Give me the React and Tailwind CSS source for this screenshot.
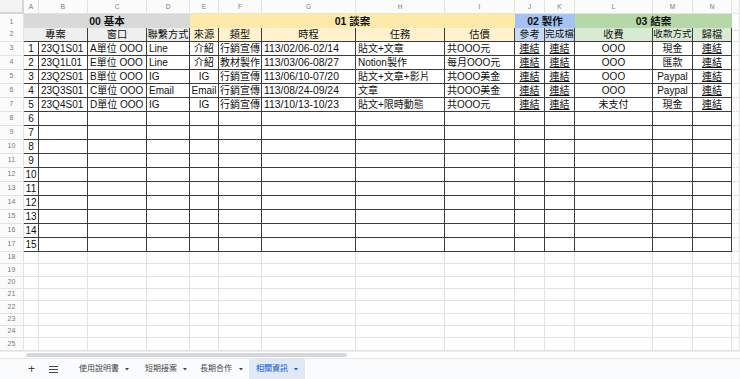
import React from 'react';

const GRID =
  'grid grid-cols-[24px_15px_49px_59px_43px_29px_43px_94px_89px_70px_30px_30px_78px_40px_39px_1fr]';

const LETTERS = ['A', 'B', 'C', 'D', 'E', 'F', 'G', 'H', 'I', 'J', 'K', 'L', 'M', 'N', ''];

// alignment per column A..N
const ALIGN = ['c', 'l', 'l', 'l', 'c', 'l', 'l', 'l', 'l', 'c', 'c', 'c', 'c', 'c'];
const LINK_COLS = [9, 10, 13];

const rows = [
  ['1', '23Q1S01', 'A單位 OOO', 'Line', '介紹', '行銷宣傳', '113/02/06-02/14', '貼文+文章', '共OOO元', '連結', '連結', 'OOO', '現金', '連結'],
  ['2', '23Q1L01', 'E單位 OOO', 'Line', '介紹', '教材製作', '113/03/06-08/27', 'Notion製作', '每月OOO元', '連結', '連結', 'OOO', '匯款', '連結'],
  ['3', '23Q2S01', 'B單位 OOO', 'IG', 'IG', '行銷宣傳', '113/06/10-07/20', '貼文+文章+影片', '共OOO美金', '連結', '連結', 'OOO', 'Paypal', '連結'],
  ['4', '23Q3S01', 'C單位 OOO', 'Email', 'Email', '行銷宣傳', '113/08/24-09/24', '文章', '共OOO美金', '連結', '連結', 'OOO', 'Paypal', '連結'],
  ['5', '23Q4S01', 'D單位 OOO', 'IG', 'IG', '行銷宣傳', '113/10/13-10/23', '貼文+限時動態', '共OOO元', '連結', '連結', '未支付', '現金', '連結'],
];

// empty numbered rows 6..15
for (let n = 6; n <= 15; n++) {
  rows.push([String(n), '', '', '', '', '', '', '', '', '', '', '', '', '']);
}

const RowNum = ({ n }) => (
  <div className="flex items-center justify-center border-r border-b border-[#e3e3e3] bg-[#fbfbfb] text-[7px] text-[#7a7a7a]">
    {n}
  </div>
);

const Caret = ({ color = '#444746' }) => (
  <svg width="6" height="6" viewBox="0 0 6 6" className="shrink-0">
    <path d="M1 2 L5 2 L3 4.4 Z" fill={color} />
  </svg>
);

const DataRow = ({ r, idx }) => (
  <div className={`${GRID} h-[14px]`}>
    <RowNum n={idx + 3} />
    {r.map((v, i) => {
      const isLink = LINK_COLS.includes(i) && v === '連結';
      return (
        <div
          key={i}
          className={`flex items-center overflow-hidden whitespace-nowrap border-r border-b border-[#3c3c3c] ${
            i === 5 ? 'px-[1px]' : 'px-[2px]'
          } ${i === 6 ? 'text-[10.4px]' : 'text-[10px]'} ${
            ALIGN[i] === 'c' ? 'justify-center' : 'justify-start'
          }`}
        >
          <span className={isLink ? 'underline underline-offset-[1px]' : ''}>{v}</span>
        </div>
      );
    })}
    <div className="border-r border-b border-[#e3e3e3]" />
  </div>
);

const EmptyRow = ({ n }) => (
  <div className={`${GRID} h-[12.35px] shrink-0`}>
    <RowNum n={n} />
    {LETTERS.map((l, i) => (
      <div key={i} className="border-r border-b border-[#e3e3e3]" />
    ))}
  </div>
);

const Sub = ({ children, bg, span, size }) => (
  <div
    className={`flex items-center justify-center overflow-hidden whitespace-nowrap border-r border-b border-[#3c3c3c] ${size || 'text-[10.2px]'} ${bg} ${span || ''}`}
  >
    {children}
  </div>
);

export default function App() {
  return (
    <div className="flex h-[379px] w-[740px] flex-col overflow-hidden bg-white font-['Liberation_Sans','Noto_Sans_CJK_TC',sans-serif] text-[#111]">
      {/* sheet grid */}
      <div className="flex h-[351px] flex-col overflow-hidden">
        {/* column letters */}
        <div className={`${GRID} h-[14px] shrink-0`}>
          <div className="border-r-2 border-b-2 border-[#d6d6d6] bg-[#f3f3f3]" />
          {LETTERS.map((l, i) => (
            <div
              key={i}
              className="flex items-center justify-center border-r border-b border-[#e3e3e3] bg-[#fbfbfb] text-[6.5px] text-[#7a7a7a]"
            >
              {l}
            </div>
          ))}
        </div>

        {/* row 1: section headers */}
        <div className={`${GRID} h-[14px] shrink-0`}>
          <RowNum n={1} />
          <div className="col-span-4 flex items-center justify-center border-b border-[#cfcfcf] bg-[#d9d9d9] text-[10.5px] font-bold">
            00 基本
          </div>
          <div className="col-span-5 flex items-center justify-center border-b border-[#e8d9a8] bg-[#fde9aa] text-[10.5px] font-bold">
            01 談案
          </div>
          <div className="col-span-2 flex items-center justify-center border-b border-[#b3c9ee] bg-[#a4c2f4] text-[10.5px] font-bold">
            02 製作
          </div>
          <div className="col-span-3 flex items-center justify-center border-b border-[#c6dcbd] bg-[#b6d7a8] text-[10.5px] font-bold">
            03 結案
          </div>
          <div className="border-r border-b border-[#e3e3e3]" />
        </div>

        {/* row 2: column titles */}
        <div className={`${GRID} h-[14px] shrink-0`}>
          <RowNum n={2} />
          <Sub bg="bg-[#efefef]" span="col-span-2">專案</Sub>
          <Sub bg="bg-[#efefef]">窗口</Sub>
          <Sub bg="bg-[#efefef]">聯繫方式</Sub>
          <Sub bg="bg-[#fff2cc]">來源</Sub>
          <Sub bg="bg-[#fff2cc]">類型</Sub>
          <Sub bg="bg-[#fff2cc]">時程</Sub>
          <Sub bg="bg-[#fff2cc]">任務</Sub>
          <Sub bg="bg-[#fff2cc]">估價</Sub>
          <Sub bg="bg-[#c9daf8]">參考</Sub>
          <Sub bg="bg-[#c9daf8]" size="text-[9.6px]">完成檔</Sub>
          <Sub bg="bg-[#d9ead3]">收費</Sub>
          <Sub bg="bg-[#d9ead3]" size="text-[9.6px]">收款方式</Sub>
          <Sub bg="bg-[#d9ead3]">歸檔</Sub>
          <div className="border-r border-b border-[#e3e3e3]" />
        </div>

        {/* rows 3-17 */}
        {rows.map((r, idx) => (
          <DataRow key={idx} r={r} idx={idx} />
        ))}

        {/* rows 18+ */}
        {[18, 19, 20, 21, 22, 23, 24, 25, ''].map((n, i) => (
          <EmptyRow key={i} n={n} />
        ))}
      </div>

      {/* horizontal scrollbar */}
      <div className="h-[7px] shrink-0 border-t border-[#ececec] bg-white">
        <div className="ml-[26px] mt-[1px] h-[4px] w-[321px] rounded-full bg-[#d5d7da]" />
      </div>

      {/* sheet tabs */}
      <div className="flex h-[21px] shrink-0 items-center border-t border-[#e6e8eb] bg-[#f9fbfd] pl-[27px] text-[8px] text-[#444746]">
        <span className="w-[9px] text-center text-[12px] leading-none">+</span>
        <svg width="9" height="7" viewBox="0 0 9 7" className="ml-[13px]">
          <path d="M0 0.5 H9 M0 3.5 H9 M0 6.5 H9" stroke="#444746" strokeWidth="1" />
        </svg>
        <span className="ml-[21px]">使用說明書</span>
        <span className="ml-[5px]"><Caret /></span>
        <span className="ml-[15px]">短期接案</span>
        <span className="ml-[5px]"><Caret /></span>
        <span className="ml-[12px]">長期合作</span>
        <span className="ml-[6px]"><Caret /></span>
        <div className="ml-[5px] flex h-full items-center bg-[#e1e9f7] pl-[7px] pr-[6px] text-[#0b57d0]">
          <span>相關資訊</span>
          <span className="ml-[5px]"><Caret color="#0b57d0" /></span>
        </div>
      </div>
    </div>
  );
}
